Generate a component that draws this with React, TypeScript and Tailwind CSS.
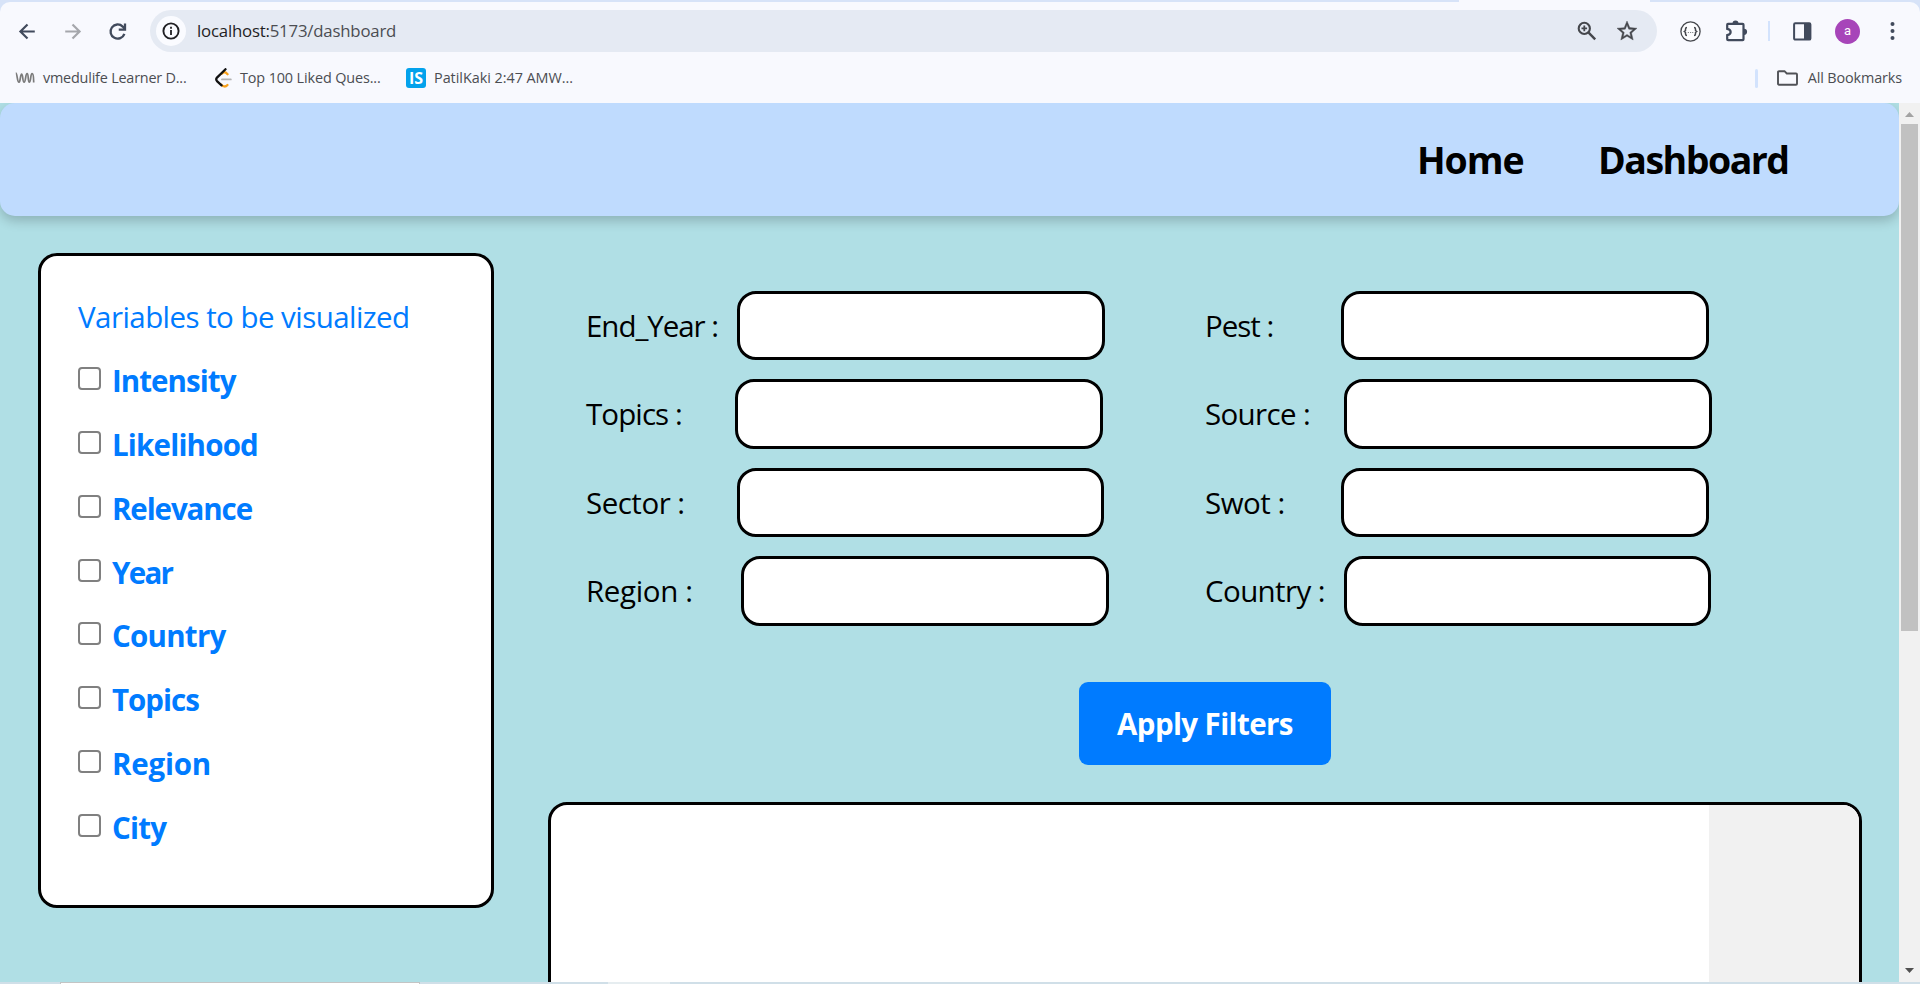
import React from "react";

type Filter = [string, string, string, string];

const filtersLeft: Filter[] = [
  ["End_Year :", "w-[151px]", "w-[368px]", "tracking-[-1.05px]"],
  ["Topics :", "w-[149px]", "w-[368px]", "tracking-[-0.9px]"],
  ["Sector :", "w-[151px]", "w-[367px]", "tracking-[-0.5px]"],
  ["Region :", "w-[155px]", "w-[368px]", "tracking-[-0.35px]"],
];
const filtersRight: Filter[] = [
  ["Pest :", "w-[136px]", "w-[368px]", "tracking-[-1px]"],
  ["Source :", "w-[139px]", "w-[368px]", "tracking-[-0.65px]"],
  ["Swot :", "w-[136px]", "w-[368px]", "tracking-[-0.5px]"],
  ["Country :", "w-[139px]", "w-[367px]", "tracking-[-0.6px]"],
];
const variables: [string, string][] = [
  ["Intensity", "tracking-[-0.95px]"],
  ["Likelihood", "tracking-[-0.8px]"],
  ["Relevance", "tracking-[-1.1px]"],
  ["Year", "tracking-[-1.7px]"],
  ["Country", "tracking-[-0.75px]"],
  ["Topics", "tracking-[-1px]"],
  ["Region", "tracking-[-0.2px]"],
  ["City", "tracking-[-0.8px]"],
];

function Filters({ items }: { items: Filter[] }) {
  return (
    <div className="flex w-[619px] shrink-0 flex-col gap-[19px]">
      {items.map(([label, lw, iw, track]) => (
        <div key={label} className="flex h-[69.4px] items-center">
          <label className={`${lw} ${track} shrink-0 whitespace-pre pt-[1px] text-[29.5px]`}>{label}</label>
          <input className={`${iw} h-full shrink-0 rounded-[19px] border-[3px] border-black bg-white`} />
        </div>
      ))}
    </div>
  );
}

function Toolbar() {
  return (
    <div className="flex h-[58px] shrink-0 items-center">
      <svg className="ml-[15px] h-[25px] w-[25px] shrink-0" viewBox="0 0 24 24" fill="none" stroke="#414a5c" strokeWidth="2.1">
        <path d="M19 12H5.6M12 5.2 5.2 12l6.8 6.8" />
      </svg>
      <svg className="ml-[20px] h-[25px] w-[25px] shrink-0" viewBox="0 0 24 24" fill="none" stroke="#a5a7ac" strokeWidth="2.1">
        <path d="M5 12h13.4M12 5.2l6.8 6.8-6.8 6.8" />
      </svg>
      <svg className="ml-[20px] h-[25px] w-[25px] shrink-0" viewBox="0 0 24 24" fill="none" stroke="#414a5c" strokeWidth="2.2">
        <path d="M18.6 14.2A6.8 6.8 0 1 1 17 7.3l1.9 2.2" />
        <path d="M19.200 4.200v6h-6" />
      </svg>
      <div className="ml-[20px] flex h-[42px] w-[1507px] shrink-0 items-center rounded-full bg-[#e5eaf3] pl-[6px] pr-[18px]">
        <div className="flex h-[30px] w-[30px] items-center justify-center rounded-full bg-[#fafbff]">
          <svg className="h-[18px] w-[18px]" viewBox="0 0 18 18">
            <circle cx="9" cy="9" r="7.6" fill="none" stroke="#1f1f23" strokeWidth="1.9" />
            <path d="M9 8v5M9 4.8v2" stroke="#1f1f23" strokeWidth="1.8" />
          </svg>
        </div>
        <div className="ml-[11px] text-[16.8px] leading-none tracking-[-0.2px] text-[#4b4d52]">
          <span className="text-[#1f1f1f]">localhost:</span>5173/dashboard
        </div>
        <div className="flex-1" />
        <svg className="h-[20px] w-[20px]" viewBox="0 0 20 20" fill="none" stroke="#45474c">
          <circle cx="7.3" cy="7.4" r="5.6" strokeWidth="2.1" />
          <path d="M11.600 11.700l6.600 6.600" strokeWidth="2.4" />
          <path d="M7.300 4.600v5.600M4.500 7.400h5.600" strokeWidth="1.8" />
        </svg>
        <svg className="ml-[18px] h-[24px] w-[24px]" viewBox="0 0 24 24" fill="#45474c" stroke="#45474c" strokeWidth="0.4">
          <path d="M22 9.24l-7.19-.62L12 2 9.19 8.63 2 9.24l5.46 4.73L5.82 21 12 17.27 18.18 21l-1.63-7.03L22 9.24zM12 15.4l-3.76 2.27 1-4.28-3.32-2.88 4.38-.38L12 6.1l1.71 4.04 4.38.38-3.32 2.88 1 4.28L12 15.4z" />
        </svg>
      </div>
      <svg className="ml-[23px] h-[21px] w-[21px] shrink-0" viewBox="0 0 21 21" fill="none" stroke="#45474c">
        <circle cx="10.5" cy="10.5" r="9.6" strokeWidth="1.3" fill="#fdfdfe" />
        <path d="M7 6.500c-1.500 0-1.500.6-1.500 1.500v1.500l-1.200 1 1.200 1v1.500c0 .9 0 1.500 1.500 1.500M14 6.500c1.500 0 1.500.6 1.500 1.500v1.500l1.200 1-1.200 1v1.500c0 .9 0 1.500-1.500 1.500" strokeWidth="1.5" />
        <path d="M7.800 11.500h1.200M10 11.500h1.200M12.100 11.500h1.200" strokeWidth="1" stroke="#85878b" />
      </svg>
      <svg className="ml-[24px] h-[22px] w-[23px] shrink-0" viewBox="0 0 23 22">
        <path d="M3 3.800h14.600q.9 0 .9.900v14.600q0 .9-.9.900H3.200q-1 0-1-.9v-4.200c4.600-.8 4.600-5.500 0-6.300V4.700q0-.9.800-.9z" fill="none" stroke="#414a5c" strokeWidth="2.200" />
        <path d="M7.500 3.500a3 3 0 0 1 6 0zM19 8.700a3 3 0 0 1 0 6.200z" fill="#414a5c" />
      </svg>
      <div className="ml-[20px] h-[20px] w-[2px] bg-[#d3e3fd]" />
      <svg className="ml-[23px] h-[19px] w-[19px] shrink-0" viewBox="0 0 19 19">
        <rect x="1.100" y="1.300" width="16.300" height="16.300" rx="1.200" fill="none" stroke="#414a5c" strokeWidth="2" />
        <path d="M11 1h7v17h-7z" fill="#414a5c" />
      </svg>
      <div className="ml-[23px] flex h-[25px] w-[25px] shrink-0 items-center justify-center rounded-full bg-[#a745b9] pb-[1px] font-[Roboto,sans-serif] text-[13px] leading-none text-white">a</div>
      <svg className="ml-[30px] h-[20px] w-[5px] shrink-0" viewBox="0 0 5 20" fill="#414a5c">
        <circle cx="2.500" cy="3" r="2" />
        <circle cx="2.500" cy="10" r="2" />
        <circle cx="2.500" cy="17" r="2" />
      </svg>
    </div>
  );
}

function Bookmarks() {
  return (
    <div className="flex h-[36px] shrink-0 items-center text-[14.4px] leading-none tracking-[-0.2px] text-[#4b4d52]">
      <svg className="ml-[15px] h-[12px] w-[20px] shrink-0" viewBox="0 0 20 12" fill="none" stroke="#7b7b7b" strokeWidth="1.7">
        <path d="M.8 1.200c1.500 0 1.300 8.600 3 9 1.700.3 1.400-8 2.800-8 1.500 0 .8 8 2.500 8 1.800 0 1.200-8.500 3-8.500 1.700 0 .6 8.500 2.200 8.500 1.800 0 1-8.500 2.800-8.500 1.600 0 1.500 4 1.600 8.800" />
      </svg>
      <span className="ml-[8px] w-[172px] whitespace-nowrap">vmedulife Learner D...</span>
      <svg className="h-[20px] w-[17px] shrink-0" viewBox="0 0 17 20" fill="none" strokeWidth="2.300" strokeLinecap="round">
        <path d="M6.500 16.800c1.500 2.200 4.200 2.200 6 .2M7 5.500l1.600-1.200c1.500-.5 2.700.5 4 1.900" stroke="#f9a11b" />
        <path d="M7 11.400h8.800" stroke="#b3b3b3" strokeWidth="1.900" />
        <path d="M10.500 1.200 2 9.600c-1 1.100-1 2.300 0 3.500l4.600 4.200" stroke="#111" />
      </svg>
      <span className="ml-[8px] w-[166px] whitespace-nowrap tracking-[-0.12px]">Top 100 Liked Ques...</span>
      <div className="flex h-[20px] w-[20px] shrink-0 items-center justify-center rounded-[3px] bg-[#03a2ec] text-[16px] font-bold leading-none tracking-normal text-white">IS</div>
      <span className="ml-[8px] whitespace-nowrap tracking-[-0.03px]">PatilKaki 2:47 AMW...</span>
      <div className="flex-1" />
      <div className="h-[19px] w-[3px] rounded-full bg-[#d3e3fd]" />
      <svg className="ml-[19px] h-[16px] w-[21px] shrink-0" viewBox="0 0 21 16" fill="none" stroke="#505257" strokeWidth="1.900">
        <path d="M2 1.200h5.500l2.300 2.300h9.200q1 0 1 1v9.200q0 1-1 1H2q-1 0-1-1V2.200q0-1 1-1z" />
      </svg>
      <span className="ml-[10px] mr-[18px] whitespace-nowrap tracking-[-0.12px]">All Bookmarks</span>
    </div>
  );
}

export default function App() {
  return (
    <div className="flex h-[984px] w-[1920px] flex-col overflow-hidden bg-[#d7e3f8] font-['Open_Sans',sans-serif] text-black">
      <div className="flex h-[2px] shrink-0">
        <div className="ml-[1459px] w-[191px] bg-[#f8f9fe]" />
      </div>
      <div className="flex h-[101px] shrink-0 flex-col rounded-t-[10px] bg-[#f8f9fe]">
        <Toolbar />
        <Bookmarks />
      </div>
      <div className="flex h-[879px] shrink-0">
        <main className="flex w-[1899px] flex-col overflow-hidden bg-[#b0dfe5]">
          <nav className="flex h-[113px] shrink-0 items-center justify-end rounded-[15px] bg-[#bfdbfe] pr-[111px] text-[37.500px] font-bold leading-none shadow-[0_5px_12px_rgba(0,0,0,0.2)]">
            <a className="w-[181px] tracking-[-1.1px]">Home</a>
            <a className="w-[190px] tracking-[-1.5px]">Dashboard</a>
          </nav>
          <div className="flex min-h-0 flex-1">
            <aside className="ml-[38px] mt-[37px] flex h-[655px] w-[456px] shrink-0 flex-col rounded-[19px] border-[3px] border-black bg-white pl-[37px] pt-[43px] text-[29.500px] leading-none text-[#007bff]">
              <h2 className="h-[63px] whitespace-nowrap pt-[3px] tracking-[-0.55px]">Variables to be visualized</h2>
              {variables.map(([v, track]) => (
                <label key={v} className="flex h-[63.850px] shrink-0 items-start font-bold">
                  <input type="checkbox" className="mt-[5px] h-[23px] w-[23px] shrink-0 appearance-none rounded-[4px] border-2 border-[#808080] bg-white" />
                  <span className={`${track} ml-[11px] pt-[4px]`}>{v}</span>
                </label>
              ))}
            </aside>
            <section className="ml-[54px] flex w-[1314px] shrink-0 flex-col">
              <div className="flex pl-[38px] pt-[75px]">
                <Filters items={filtersLeft} />
                <Filters items={filtersRight} />
              </div>
              <button className="mt-[56px] h-[83px] w-[252px] shrink-0 self-center rounded-[9px] bg-[#007bff] pt-[2px] text-[29.500px] font-bold tracking-[-0.6px] text-white">
                Apply Filters
              </button>
              <div className="mt-[37px] flex h-[300px] shrink-0 justify-end overflow-hidden rounded-[19px] border-[3px] border-black bg-white">
                <div className="w-[150px] bg-[#f1f1f1]" />
              </div>
            </section>
          </div>
        </main>
        <div className="flex w-[21px] flex-col items-center bg-[#f1f1f1]">
          <svg className="h-[21px] w-[21px] shrink-0" viewBox="0 0 21 21" fill="#a3a3a3">
            <path d="M6 14l4.500-5 4.500 5z" />
          </svg>
          <div className="h-[507px] w-[17px] bg-[#c1c1c1]" />
          <div className="flex-1" />
          <svg className="h-[21px] w-[21px] shrink-0" viewBox="0 0 21 21" fill="#505050">
            <path d="M6 7l4.500 5 4.500-5z" />
          </svg>
        </div>
      </div>
      <div className="flex h-[2px] shrink-0 bg-[#d0dfe8]">
        <div className="ml-[60px] w-[360px] border-x border-t border-[#c4c4c4] bg-white" />
        <div className="ml-[188px] w-[62px] bg-[#e6edf0]" />
      </div>
    </div>
  );
}
